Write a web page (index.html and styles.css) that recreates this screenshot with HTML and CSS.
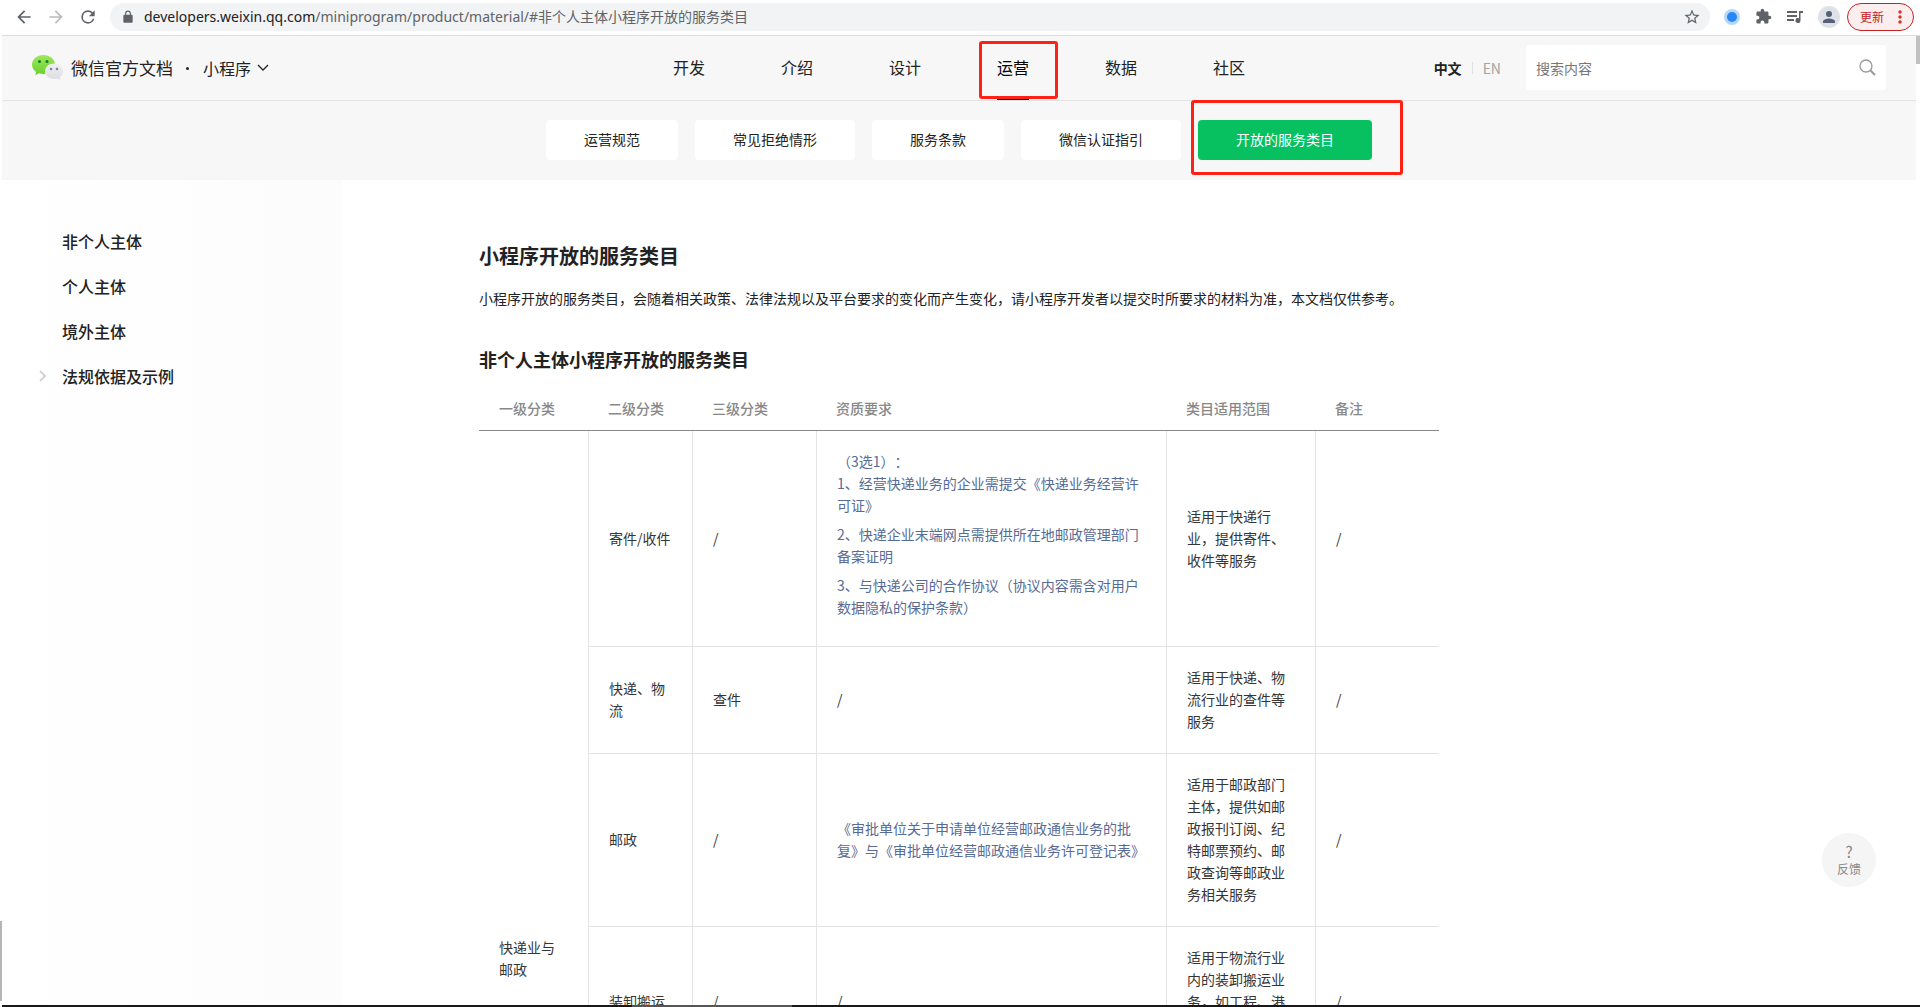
FILE: index.html
```html
<!DOCTYPE html>
<html lang="zh-CN">
<head>
<meta charset="utf-8">
<title>小程序开放的服务类目 | 微信开放文档</title>
<link rel="stylesheet" href="styles.css">
</head>
<body>
<div class="toolbar">
  <div class="toolbar-nav">
    <button class="icon-btn" aria-label="后退"><svg width="20" height="20" viewBox="0 0 24 24"><path d="M20 11H7.83l5.59-5.59L12 4l-8 8 8 8 1.41-1.41L7.83 13H20v-2z"/></svg></button>
    <button class="icon-btn muted" aria-label="前进"><svg width="20" height="20" viewBox="0 0 24 24"><path d="M4 11h12.17l-5.59-5.59L12 4l8 8-8 8-1.41-1.41L16.17 13H4v-2z"/></svg></button>
    <button class="icon-btn" aria-label="刷新"><svg width="20" height="20" viewBox="0 0 24 24"><path d="M17.65 6.35A7.96 7.96 0 0 0 12 4a8 8 0 1 0 7.73 10h-2.08A6 6 0 1 1 12 6c1.66 0 3.14.69 4.22 1.78L13 11h7V4l-2.35 2.35z"/></svg></button>
  </div>
  <div class="omnibox">
    <svg width="14" height="14" viewBox="0 0 24 24"><path d="M18 8h-1V6A5 5 0 0 0 7 6v2H6a2 2 0 0 0-2 2v10c0 1.100.9 2 2 2h12a2 2 0 0 0 2-2V10a2 2 0 0 0-2-2zM9 6a3 3 0 0 1 6 0v2H9z"/></svg>
    <span class="url"><span class="url-host">developers.weixin.qq.com</span>/miniprogram/product/material/#非个人主体小程序开放的服务类目</span>
    <button class="icon-btn" aria-label="收藏"><svg width="18" height="18" viewBox="0 0 24 24"><path d="M22 9.240l-7.190-.62L12 2 9.190 8.630 2 9.240l5.460 4.730L5.820 21 12 17.270 18.180 21l-1.630-7.030L22 9.240zM12 15.400l-3.760 2.270 1-4.280-3.320-2.880 4.380-.38L12 6.100l1.710 4.040 4.380.38-3.320 2.880 1 4.280L12 15.400z"/></svg></button>
  </div>
  <div class="toolbar-end">
    <svg width="16" height="16" viewBox="0 0 16 16"><circle cx="8" cy="8" r="8" fill="#b7d6fb"/><circle cx="8" cy="8" r="5" fill="#2a85f5"/></svg>
    <svg width="17" height="17" viewBox="0 0 24 24"><path d="M20.500 11H19V7c0-1.100-.9-2-2-2h-4V3.500a2.500 2.500 0 0 0-5 0V5H4c-1.100 0-2 .9-2 2v3.800h1.500a2.700 2.700 0 0 1 0 5.400H2V20c0 1.100.9 2 2 2h3.800v-1.500a2.700 2.700 0 0 1 5.400 0V22H17c1.100 0 2-.9 2-2v-4h1.500a2.500 2.500 0 0 0 0-5z"/></svg>
    <svg width="16" height="16" viewBox="0 0 16 16"><path d="M0 2h10v2H0zM0 6h10v2H0zM0 10h7v2H0zM12 2h4v2h-2.500v7.500a2.500 2.500 0 1 1-1.500-2.300z"/></svg>
    <svg width="22" height="22" viewBox="0 0 22 22"><circle cx="11" cy="11" r="11" fill="#dee1e6"/><circle cx="11" cy="8" r="3" fill="#56607a"/><path d="M5 17v-1.500c0-2 4-3 6-3s6 1 6 3V17z" fill="#56607a"/></svg>
    <button class="update-btn">更新<svg width="4" height="14" viewBox="0 0 4 14"><circle cx="2" cy="2" r="1.700"/><circle cx="2" cy="7" r="1.700"/><circle cx="2" cy="12" r="1.700"/></svg></button>
  </div>
</div>

<div class="page">
  <header class="header">
    <div class="brand">
      <svg class="logo" width="31" height="26" viewBox="0 0 31 26">
        <defs>
          <linearGradient id="g" x1="0" y1="0" x2="0" y2="1"><stop offset="0" stop-color="#9be860"/><stop offset="1" stop-color="#6bd02b"/></linearGradient>
          <linearGradient id="w" x1="0" y1="0" x2="0" y2="1"><stop offset="0" stop-color="#f0f0f3"/><stop offset="1" stop-color="#dcdde3"/></linearGradient>
        </defs>
        <path d="M11.500 0C5 0 0 4.300 0 9.600c0 3 1.600 5.600 4.200 7.400L3.300 20.200 7 18.300c1.400.5 2.900.7 4.500.7 6.500 0 11.500-4.100 11.500-9.400S18 0 11.500 0z" fill="url(#g)"/>
        <circle cx="7.500" cy="6.500" r="1.500" fill="#1c7a23"/><circle cx="15" cy="6.500" r="1.500" fill="#1c7a23"/>
        <path d="M22 8.500c-5 0-9 3.400-9 7.800s4 7.700 9 7.700c1.200 0 2.400-.2 3.400-.6l3 1.600-.7-2.700c2.100-1.400 3.300-3.600 3.300-6 0-4.400-4-7.800-9-7.800z" fill="url(#w)"/>
        <circle cx="19" cy="14" r="1.300" fill="#80848c"/><circle cx="25" cy="14" r="1.300" fill="#80848c"/>
      </svg>
      <a class="brand-name" href="#">微信官方文档</a>
      <span class="brand-dot"></span>
      <button class="product-btn">小程序<svg width="12" height="8" viewBox="0 0 12 8"><path d="M1 1l5 5 5-5" fill="none" stroke="#222" stroke-width="1.300"/></svg></button>
    </div>
    <nav class="nav">
      <a href="#">开发</a>
      <a href="#">介绍</a>
      <a href="#">设计</a>
      <a href="#" class="active">运营<span class="mark mark-nav"></span></a>
      <a href="#">数据</a>
      <a href="#">社区</a>
    </nav>
    <div class="header-end">
      <div class="lang"><a href="#" class="lang-on">中文</a><a href="#" class="lang-off">EN</a></div>
      <form class="search">
        <input type="text" placeholder="搜索内容" aria-label="搜索内容">
        <button type="button" class="icon-btn" aria-label="搜索"><svg width="17" height="17" viewBox="0 0 17 17" fill="none" stroke="#999"><circle cx="7" cy="7" r="6" stroke-width="1.300"/><path d="M11 11l5 5" stroke-width="2"/></svg></button>
      </form>
    </div>
  </header>

  <nav class="subnav">
    <a href="#">运营规范</a>
    <a href="#">常见拒绝情形</a>
    <a href="#">服务条款</a>
    <a href="#">微信认证指引</a>
    <a href="#" class="active">开放的服务类目<span class="mark mark-sub"></span></a>
  </nav>

  <div class="content">
    <aside class="sidebar">
      <a href="#">非个人主体</a>
      <a href="#">个人主体</a>
      <a href="#">境外主体</a>
      <a href="#"><svg width="8" height="12" viewBox="0 0 8 12"><path d="M1 1l5 5-5 5" fill="none" stroke="#c8c8c8" stroke-width="1.500"/></svg>法规依据及示例</a>
    </aside>
    <main class="article">
      <h1>小程序开放的服务类目</h1>
      <p class="intro">小程序开放的服务类目，会随着相关政策、法律法规以及平台要求的变化而产生变化，请小程序开发者以提交时所要求的材料为准，本文档仅供参考。</p>
      <h2>非个人主体小程序开放的服务类目</h2>
      <table>
        <colgroup><col class="c1"><col class="c2"><col class="c3"><col class="c4"><col class="c5"><col class="c6"></colgroup>
        <thead>
          <tr><th>一级分类</th><th>二级分类</th><th>三级分类</th><th>资质要求</th><th>类目适用范围</th><th>备注</th></tr>
        </thead>
        <tbody>
          <tr>
            <td rowspan="7">快递业与邮政</td>
            <td>寄件/收件</td><td>/</td>
            <td>
              <p><a href="#">（3选1）：<br>1、经营快递业务的企业需提交《快递业务经营许可证》</a></p>
              <p><a href="#">2、快递企业末端网点需提供所在地邮政管理部门备案证明</a></p>
              <p><a href="#">3、与快递公司的合作协议（协议内容需含对用户数据隐私的保护条款）</a></p>
            </td>
            <td>适用于快递行业，提供寄件、收件等服务</td><td>/</td>
          </tr>
          <tr><td>快递、物流</td><td>查件</td><td>/</td><td>适用于快递、物流行业的查件等服务</td><td>/</td></tr>
          <tr><td>邮政</td><td>/</td><td><a href="#">《审批单位关于申请单位经营邮政通信业务的批复》与《审批单位经营邮政通信业务许可登记表》</a></td><td>适用于邮政部门主体，提供如邮政报刊订阅、纪特邮票预约、邮政查询等邮政业务相关服务</td><td>/</td></tr>
          <tr><td>装卸搬运</td><td>/</td><td>/</td><td>适用于物流行业内的装卸搬运业务，如工程、港口、货物等装卸搬运服务</td><td>/</td></tr>
          <tr><td>快递柜</td><td>/</td><td>/</td><td>适用于提供快递柜、快件箱等自助设备的企业，提供寄存和收取等相关服务</td><td>/</td></tr>
          <tr><td>仓储</td><td>/</td><td>/</td><td>适用于提供货物仓储、仓库租赁管理等相关业务的服务</td><td>/</td></tr>
          <tr><td>货物运输</td><td>/</td><td>/</td><td>适用于提供公路货运、铁路货运等货物运输相关服务</td><td>/</td></tr>
        </tbody>
      </table>
    </main>
  </div>

  <div class="scroll-thumb"></div>
  <button class="feedback"><span class="feedback-mark">?</span><span>反馈</span></button>
</div>
<div class="edge-left"></div>
<div class="edge-bottom"></div>
</body>
</html>
```

FILE: styles.css
```css
* {
  box-sizing: border-box;
}

body {
  margin: 0;
  height: 100vh;
  display: flex;
  flex-direction: column;
  overflow: hidden;
  position: relative;
  background: #fff;
  color: #222;
  font-family: "Noto Sans CJK SC", sans-serif;
  font-size: 14px;
  line-height: 22px;
  text-spacing-trim: space-all;
}

a {
  color: inherit;
  text-decoration: none;
}

button {
  font: inherit;
  color: inherit;
  background: none;
  border: 0;
  padding: 0;
}

svg {
  display: block;
  flex: none;
}

/* Browser toolbar */
.toolbar {
  flex: none;
  display: flex;
  align-items: center;
  height: 36px;
  margin-left: 2px;
  padding: 0 6px 2px 12px;
  border-bottom: 1px solid #dadce0;
  fill: #5f6368;
}

.toolbar-nav {
  display: flex;
  gap: 12px;
}

.muted {
  fill: #babcbe;
}

.omnibox {
  flex: 1;
  display: flex;
  align-items: center;
  height: 28px;
  margin-left: 12px;
  padding: 0 9px 0 11px;
  border-radius: 14px;
  background: #f1f3f4;
}

.url {
  flex: 1;
  margin-left: 9px;
  color: #5f6368;
  font-family: "Noto Sans", "Noto Sans CJK SC", sans-serif;
  white-space: nowrap;
}

.url-host {
  color: #202124;
}

.toolbar-end {
  display: flex;
  align-items: center;
  gap: 15px;
  margin-left: 14px;
}

.update-btn {
  display: flex;
  align-items: center;
  justify-content: space-between;
  width: 67px;
  height: 28px;
  margin-left: -8px;
  padding: 0 11px 0 12px;
  border: 1px solid #c5221f;
  border-radius: 14px;
  background: #fceeee;
  color: #c5221f;
  fill: #d93025;
  font-size: 12px;
}

/* Document page */
.page {
  flex: 1;
  min-height: 0;
  display: flex;
  flex-direction: column;
  position: relative;
  margin-left: 2px;
}

.header {
  flex: none;
  display: grid;
  grid-template-columns: 1fr auto 1fr;
  align-items: center;
  height: 65px;
  margin-right: 4px;
  padding: 0 30px;
  border-bottom: 1px solid #e4e4e4;
  background: #f7f7f7;
  font-size: 16px;
}

.brand {
  display: flex;
  align-items: center;
}

.brand-name {
  margin-left: 8px;
  font-size: 17px;
}

.brand-dot {
  width: 3px;
  height: 3px;
  margin: 0 14px 0 13px;
  border-radius: 2px;
  background: #222;
}

.product-btn {
  display: flex;
  align-items: center;
  gap: 6px;
}

.nav {
  display: flex;
  gap: 76px;
}

.nav a {
  position: relative;
  padding-bottom: 2px;
  line-height: 62px;
}

.nav .active {
  color: #000;
  box-shadow: inset 0 -2px #000;
}

.mark {
  position: absolute;
  border: 3px solid #ff2116;
  border-radius: 3px;
  pointer-events: none;
}

.mark-nav {
  inset: 5px -29px 1px -18px;
}

.mark-sub {
  inset: -20px -31px -15px -7px;
}

.header-end {
  display: flex;
  justify-content: flex-end;
  align-items: center;
  gap: 25px;
  padding-bottom: 1px;
  font-size: 14px;
}

.lang {
  display: flex;
  align-items: center;
}

.lang-on {
  font-weight: 700;
}

.lang-off {
  margin-left: 10px;
  padding-left: 10px;
  border-left: 1px solid #e1e1e1;
  line-height: 12px;
  color: #a3a3a3;
}

.search {
  display: flex;
  align-items: center;
  width: 360px;
  height: 45px;
  padding: 0 10px;
  border-radius: 3px;
  background: #fff;
}

.search input {
  flex: 1;
  min-width: 0;
  padding: 0;
  border: 0;
  outline: 0;
  background: none;
  font: inherit;
}

.search input::placeholder {
  color: #777;
}

.subnav {
  flex: none;
  display: flex;
  justify-content: center;
  align-items: center;
  gap: 17px;
  height: 79px;
  margin-right: 4px;
  padding-bottom: 1px;
  background: #f7f7f7;
}

.subnav a {
  position: relative;
  padding: 0 38px 2px;
  border-radius: 4px;
  background: #fff;
  line-height: 38px;
}

.subnav .active {
  background: #07c160;
  color: #fff;
}

.content {
  flex: 1;
  min-height: 0;
  display: grid;
  grid-template-columns: 340px minmax(0, 1fr);
  margin-right: 4px;
  overflow-y: auto;
  scrollbar-width: none;
}

.sidebar {
  padding: 38px 0 0 32px;
  background: linear-gradient(to right, #fff, #fcfcfc);
}

.sidebar a {
  position: relative;
  display: flex;
  align-items: center;
  height: 45px;
  padding-left: 28px;
  font-size: 16px;
  font-weight: 500;
}

.sidebar svg {
  position: absolute;
  left: 5px;
}

/* The right padding mirrors the sidebar, so the article is centred on the page */
.article {
  padding: 60px 340px 0 0;
}

.article > * {
  width: 960px;
  max-width: 100%;
  margin-left: auto;
  margin-right: auto;
}

h1 {
  margin-top: 0;
  margin-bottom: 15px;
  font-size: 20px;
  line-height: 32px;
}

.intro {
  margin-top: 0;
  margin-bottom: 36px;
}

h2 {
  margin-top: 0;
  margin-bottom: 18px;
  font-size: 18px;
  line-height: 28px;
}

table {
  table-layout: fixed;
  border-collapse: separate;
  border-spacing: 0;
}

.c1 { width: 110px; }
.c2 { width: 104px; }
.c3 { width: 124px; }
.c4 { width: 350px; }
.c5 { width: 149px; }

th {
  padding: 6px 19px 11px;
  border-bottom: 1px solid #888;
  color: #888;
  font-weight: 500;
  text-align: left;
}

th:first-child {
  padding-left: 20px;
}

td {
  padding: 19px 20px 21px;
  border-right: 1px solid #e4e4e4;
  border-bottom: 1px solid #e4e4e4;
  color: #353535;
}

td:last-child {
  border-right: 0;
}

td p {
  margin: 0 0 7px;
}

td a {
  color: #576b95;
}

/* Overlays */
.scroll-thumb {
  position: absolute;
  top: 0;
  right: 0;
  width: 4px;
  height: 28px;
  background: #c1c1c1;
}

.feedback {
  position: absolute;
  right: 44px;
  bottom: 118px;
  display: flex;
  flex-direction: column;
  align-items: center;
  justify-content: center;
  width: 54px;
  height: 54px;
  border-radius: 50%;
  background: #f5f5f5;
  color: #888;
  font-size: 12px;
  line-height: 18px;
}

.feedback-mark {
  font-size: 16px;
}

.edge-left {
  position: absolute;
  left: 0;
  bottom: 6px;
  width: 2px;
  height: 80px;
  background: #b5b5b5;
}

.edge-bottom {
  flex: none;
  height: 2px;
  margin-left: 2px;
  background: linear-gradient(to right, #1a1718 630px, #555 630px, #555 790px, #1a1718 790px);
}
```
